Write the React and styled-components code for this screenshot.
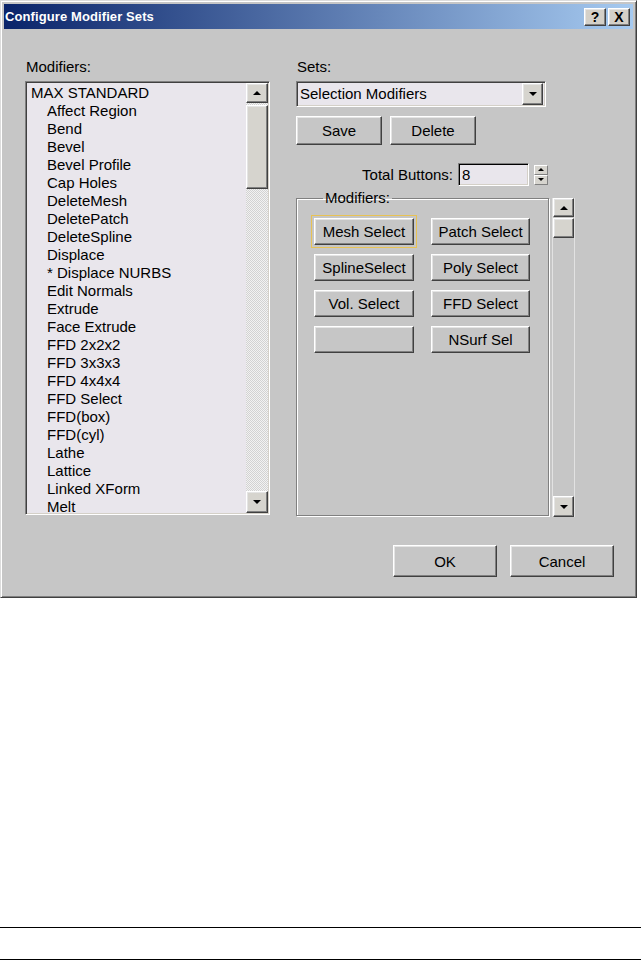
import React from "react";
import styled, { createGlobalStyle, css } from "styled-components";

const GlobalStyle = createGlobalStyle`
  html, body { margin: 0; padding: 0; background: #ffffff; }
  body { font-family: "Liberation Sans", Arial, sans-serif; color: #000; }
  * { box-sizing: border-box; }
`;

const raised = css`
  border: 1px solid;
  border-color: #ffffff #404040 #404040 #ffffff;
  box-shadow: inset -1px -1px #808080, inset 1px 1px #e4e4e4;
`;

const sunken = css`
  border: 1px solid;
  border-color: #808080 #ffffff #ffffff #808080;
  box-shadow: inset 1px 1px #404040, inset -1px -1px #d4d0c8;
  padding: 1px;
`;

const Page = styled.div`
  width: 641px;
  height: 960px;
  display: flex;
  flex-direction: column;
`;

const Window = styled.div`
  width: 637px;
  height: 598px;
  background: #c6c6c6;
  border: 1px solid;
  border-color: #dcdcdc #404040 #404040 #dcdcdc;
  box-shadow: inset 1px 1px #ffffff, inset -1px -1px #808080;
  padding: 3px;
  display: flex;
  flex-direction: column;
`;

const TitleBar = styled.div`
  height: 25px;
  flex: none;
  display: flex;
  align-items: center;
  justify-content: space-between;
  padding: 0 3px 0 1px;
  background: linear-gradient(to right, #0a246a, #a6caf0);
`;

const TitleText = styled.span`
  color: #ffffff;
  font: bold 13px "Liberation Sans", Arial, sans-serif;
  letter-spacing: 0.1px;
`;

const CaptionButtons = styled.div`
  display: flex;
  gap: 2px;
`;

const CaptionButton = styled.div`
  width: 22px;
  height: 18px;
  ${raised};
  background: #d4d0c8;
  display: flex;
  align-items: center;
  justify-content: center;
  font: bold 14px "Liberation Sans", Arial, sans-serif;
  line-height: 14px;
`;

const Body = styled.div`
  flex: 1;
  display: flex;
  flex-direction: column;
  padding: 30px 0 17px 21px;
`;

const Columns = styled.div`
  display: grid;
  grid-template-columns: 245px 280px;
  column-gap: 26px;
`;

const Column = styled.div`
  display: flex;
  flex-direction: column;
`;

const FieldLabel = styled.div`
  font-size: 15px;
  line-height: 16px;
  height: 16px;
  padding-left: 1px;
  margin-bottom: 6px;
`;

const ListBox = styled.div`
  height: 434px;
  ${sunken};
  background: #e9e6ec;
  display: flex;
`;

const ListItems = styled.div`
  flex: 1;
  overflow: hidden;
  padding-top: 1px;
`;

const ListItem = styled.div`
  font-size: 15px;
  line-height: 18px;
  white-space: nowrap;
  padding-left: ${(p) => (p.$indent ? 20 : 4)}px;
`;

const VScroll = styled.div`
  width: ${(p) => p.$width}px;
  display: flex;
  flex-direction: column;
  ${(p) =>
    p.$dither
      ? css`
          background-color: #f2f2f2;
          background-image: conic-gradient(#d2d2d2 25%, transparent 0 50%, #d2d2d2 0 75%, transparent 0);
          background-size: 2px 2px;
        `
      : css`
          background: #c6c6c6;
          border-left: 1px solid #e2e2e2;
          border-right: 1px solid #e2e2e2;
        `}
`;

const ScrollButton = styled.div`
  height: ${(p) => p.$h}px;
  flex: none;
  ${raised};
  background: #d6d4ce;
  display: flex;
  align-items: center;
  justify-content: center;
`;

const Thumb = styled.div`
  height: ${(p) => p.$h}px;
  margin-top: ${(p) => p.$gap}px;
  flex: none;
  ${raised};
  background: #d6d4ce;
`;

const ScrollGap = styled.div`
  flex: 1;
`;

const Arrow = styled.span`
  width: 0;
  height: 0;
  border-left: ${(p) => p.$size}px solid transparent;
  border-right: ${(p) => p.$size}px solid transparent;
  ${(p) =>
    p.$dir === "up"
      ? css`border-bottom: ${p.$size}px solid #000;`
      : css`border-top: ${p.$size}px solid #000;`}
`;

const Dropdown = styled.div`
  width: 250px;
  height: 26px;
  ${sunken};
  background: #e9e6ec;
  display: flex;
`;

const DropText = styled.div`
  flex: 1;
  font-size: 15px;
  line-height: 22px;
  padding-left: 2px;
`;

const DropButton = styled(ScrollButton)`
  width: 21px;
  margin: 0 1px 0 0;
`;

const ButtonRow = styled.div`
  display: flex;
  gap: ${(p) => p.$gap}px;
  margin-top: ${(p) => p.$top || 0}px;
  justify-content: ${(p) => (p.$end ? "flex-end" : "flex-start")};
  padding-right: ${(p) => p.$right || 0}px;
`;

const PushButton = styled.div`
  width: ${(p) => (p.$w ? `${p.$w}px` : "100%")};
  height: ${(p) => (p.$h ? `${p.$h}px` : "100%")};
  ${raised};
  background: #c6c6c6;
  display: flex;
  align-items: center;
  justify-content: center;
  font-size: 15px;
  white-space: nowrap;
`;

const FocusRing = styled.div`
  margin: -3px;
  padding: 2px;
  border: 1px solid #e8c254;
`;

const TotalRow = styled.div`
  width: 253px;
  height: 23px;
  margin-top: 18px;
  display: flex;
  align-items: center;
  justify-content: flex-end;
  padding-right: 1px;
`;

const TotalLabel = styled.span`
  font-size: 15px;
  margin-right: 5px;
`;

const NumInput = styled.div`
  width: 71px;
  height: 23px;
  border: 1px solid;
  border-color: #808080 #ffffff #ffffff #808080;
  box-shadow: inset 1px 1px #000000, inset -1px -1px #d4d0c8;
  background: #e9e6ec;
  font-size: 15px;
  line-height: 21px;
  padding-left: 3px;
`;

const Spinner = styled.div`
  width: 14px;
  height: 20px;
  margin-left: 5px;
  display: flex;
  flex-direction: column;
`;

const SpinHalf = styled.div`
  flex: 1;
  background: #d6d4ce;
  border: 1px solid;
  border-color: #ffffff #808080 #808080 #ffffff;
  display: flex;
  align-items: center;
  justify-content: center;
`;

const GroupRow = styled.div`
  display: flex;
  gap: 3px;
  margin-top: 4px;
  align-items: flex-start;
`;

const GroupBox = styled.fieldset`
  width: 253px;
  height: 326px;
  margin: 0;
  border: 1px solid #808080;
  box-shadow: inset 1px 1px #ffffff, 1px 1px #ffffff;
  padding: 12px 0 0 17px;
  min-width: 0;
`;

const GroupLegend = styled.legend`
  font-size: 15px;
  line-height: 16px;
  padding: 0 2px;
  margin-left: 9px;
`;

const ModGrid = styled.div`
  display: grid;
  grid-template-columns: 100px 99px;
  grid-auto-rows: 27px;
  column-gap: 17px;
  row-gap: 9px;
`;

const SideScroll = styled(VScroll)`
  margin-top: 8px;
  height: 319px;
`;

const DialogButtons = styled(ButtonRow)`
  margin-top: auto;
`;

const PageRule = styled.div`
  margin-top: auto;
  height: 33px;
  border-top: 1px solid #000;
  border-bottom: 1px solid #000;
`;

const modifiers = [
  ["MAX STANDARD", false],
  ["Affect Region", true],
  ["Bend", true],
  ["Bevel", true],
  ["Bevel Profile", true],
  ["Cap Holes", true],
  ["DeleteMesh", true],
  ["DeletePatch", true],
  ["DeleteSpline", true],
  ["Displace", true],
  ["* Displace NURBS", true],
  ["Edit Normals", true],
  ["Extrude", true],
  ["Face Extrude", true],
  ["FFD 2x2x2", true],
  ["FFD 3x3x3", true],
  ["FFD 4x4x4", true],
  ["FFD Select", true],
  ["FFD(box)", true],
  ["FFD(cyl)", true],
  ["Lathe", true],
  ["Lattice", true],
  ["Linked XForm", true],
  ["Melt", true],
];

const setButtons = [
  "Mesh Select",
  "Patch Select",
  "SplineSelect",
  "Poly Select",
  "Vol. Select",
  "FFD Select",
  "",
  "NSurf Sel",
];

export default function App() {
  return (
    <Page>
      <GlobalStyle />
      <Window>
        <TitleBar>
          <TitleText>Configure Modifier Sets</TitleText>
          <CaptionButtons>
            <CaptionButton>?</CaptionButton>
            <CaptionButton>X</CaptionButton>
          </CaptionButtons>
        </TitleBar>
        <Body>
          <Columns>
            <Column>
              <FieldLabel>Modifiers:</FieldLabel>
              <ListBox>
                <ListItems>
                  {modifiers.map(([name, indent]) => (
                    <ListItem key={name} $indent={indent}>
                      {name}
                    </ListItem>
                  ))}
                </ListItems>
                <VScroll $width={22} $dither>
                  <ScrollButton $h={20}>
                    <Arrow $dir="up" $size={4} />
                  </ScrollButton>
                  <Thumb $h={84} $gap={2} />
                  <ScrollGap />
                  <ScrollButton $h={22}>
                    <Arrow $dir="down" $size={4} />
                  </ScrollButton>
                </VScroll>
              </ListBox>
            </Column>
            <Column>
              <FieldLabel>Sets:</FieldLabel>
              <Dropdown>
                <DropText>Selection Modifiers</DropText>
                <DropButton $h={22}>
                  <Arrow $dir="down" $size={4} />
                </DropButton>
              </Dropdown>
              <ButtonRow $gap={8} $top={9}>
                <PushButton $w={86} $h={29}>Save</PushButton>
                <PushButton $w={86} $h={29}>Delete</PushButton>
              </ButtonRow>
              <TotalRow>
                <TotalLabel>Total Buttons:</TotalLabel>
                <NumInput>8</NumInput>
                <Spinner>
                  <SpinHalf>
                    <Arrow $dir="up" $size={3} />
                  </SpinHalf>
                  <SpinHalf>
                    <Arrow $dir="down" $size={3} />
                  </SpinHalf>
                </Spinner>
              </TotalRow>
              <GroupRow>
                <GroupBox>
                  <GroupLegend>Modifiers:</GroupLegend>
                  <ModGrid>
                    {setButtons.map((label, i) =>
                      i === 0 ? (
                        <FocusRing key={i}>
                          <PushButton>{label}</PushButton>
                        </FocusRing>
                      ) : (
                        <PushButton key={i}>{label}</PushButton>
                      )
                    )}
                  </ModGrid>
                </GroupBox>
                <SideScroll $width={23}>
                  <ScrollButton $h={19}>
                    <Arrow $dir="up" $size={4} />
                  </ScrollButton>
                  <Thumb $h={20} $gap={1} />
                  <ScrollGap />
                  <ScrollButton $h={21}>
                    <Arrow $dir="down" $size={4} />
                  </ScrollButton>
                </SideScroll>
              </GroupRow>
            </Column>
          </Columns>
          <DialogButtons $gap={13} $end $right={19}>
            <PushButton $w={104} $h={32}>OK</PushButton>
            <PushButton $w={104} $h={32}>Cancel</PushButton>
          </DialogButtons>
        </Body>
      </Window>
      <PageRule />
    </Page>
  );
}
